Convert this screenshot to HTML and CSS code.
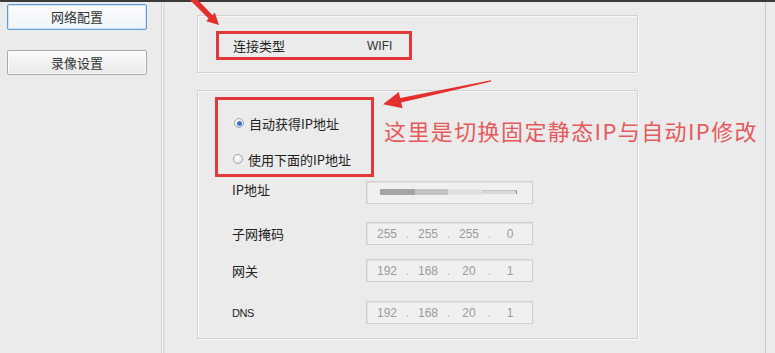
FILE: index.html
```html
<!DOCTYPE html>
<html lang="zh-CN">
<head>
<meta charset="utf-8">
<title>网络配置</title>
<link rel="stylesheet" href="styles.css">
</head>
<body>
<div class="topbar"></div>
<div class="app">
  <aside class="sidebar">
    <button class="nav-btn active">网络配置</button>
    <button class="nav-btn second">录像设置</button>
  </aside>
  <main class="content">
    <section class="group group-conn">
      <div class="mark mark-conn">
        <span class="conn-label">连接类型</span>
        <span class="conn-value">WIFI</span>
      </div>
    </section>
    <section class="group group-ip">
      <div class="mark mark-radio">
        <div class="radio-row"><span class="radio checked"></span><span>自动获得IP地址</span></div>
        <div class="radio-row second"><span class="radio"></span><span>使用下面的IP地址</span></div>
      </div>
      <div class="field field-ip">
        <span class="field-label">IP地址</span>
        <div class="ipbox blurred">
          <span class="bar bar-dark"></span><span class="bar bar-mid"></span><span class="bar bar-light"></span><span class="bar bar-line"></span>
        </div>
      </div>
      <div class="field field-mask">
        <span class="field-label">子网掩码</span>
        <div class="ipbox"><span class="seg">255</span><span class="dot">.</span><span class="seg">255</span><span class="dot">.</span><span class="seg">255</span><span class="dot">.</span><span class="seg">0</span></div>
      </div>
      <div class="field field-gw">
        <span class="field-label">网关</span>
        <div class="ipbox"><span class="seg">192</span><span class="dot">.</span><span class="seg">168</span><span class="dot">.</span><span class="seg">20</span><span class="dot">.</span><span class="seg">1</span></div>
      </div>
      <div class="field field-dns">
        <span class="field-label latin">DNS</span>
        <div class="ipbox"><span class="seg">192</span><span class="dot">.</span><span class="seg">168</span><span class="dot">.</span><span class="seg">20</span><span class="dot">.</span><span class="seg">1</span></div>
      </div>
    </section>
  </main>
  <div class="edge"></div>
</div>
<svg class="arrows" width="775" height="353" viewBox="0 0 775 353">
  <polygon fill="#e3302c" points="190,0 198,0 212.5,15.2 214.8,12.4 219,25 206.2,21.2 208.5,18.6"/>
  <polygon fill="#e3302c" points="491,80.2 491.3,81.4 401.2,102.4 402.6,108.2 383,104.2 398.8,92.1 400.2,97.9"/>
</svg>
<p class="note">这里是切换固定静态IP与自动IP修改</p>
</body>
</html>
```
FILE: styles.css
```css
* { box-sizing: border-box; }

html, body {
  margin: 0;
  padding: 0;
}

body {
  width: 775px;
  height: 353px;
  overflow: hidden;
  position: relative;
  background: #ebebeb;
  font-family: "Noto Sans CJK SC", "Liberation Sans", sans-serif;
  font-size: 13px;
  color: #222;
}

.topbar {
  height: 2px;
  background: #3b3b37;
}

.app {
  display: flex;
  height: 351px;
}

.sidebar {
  width: 162px;
  flex: none;
  border-right: 1px solid #d2d2d2;
  box-shadow: 1px 0 0 #f7f7f7, 3px 0 0 #dedede;
  padding: 2px 0 0 7px;
  display: flex;
  flex-direction: column;
  align-items: flex-start;
}

.nav-btn {
  width: 140px;
  height: 26px;
  padding: 0;
  border: 1px solid #a9a9a9;
  border-radius: 2px;
  background: linear-gradient(#fbfbfb, #e9e9e9);
  box-shadow: inset 0 0 0 1px #fdfdfd;
  font-family: "Noto Sans CJK SC", sans-serif;
  font-size: 13px;
  color: #333;
  line-height: 22px;
}

.nav-btn.active {
  border-color: #5d9ad6;
  box-shadow: inset 0 0 0 1px #cfe4f7;
  background: linear-gradient(#fdfdfd, #eef4f9);
}

.nav-btn.second {
  margin-top: 20px;
  height: 25px;
}

.content {
  flex: 1;
  padding: 13px 0 0 35px;
  display: flex;
  flex-direction: column;
}

.edge {
  width: 10px;
  flex: none;
  border-left: 1px solid #c9c9c9;
}

.group {
  width: 441px;
  border: 1px solid #d3d3d3;
  box-shadow: inset 1px 1px 0 #f8f8f8, 1px 1px 0 #f8f8f8;
  background: #ebebeb;
}

.group-conn {
  height: 58px;
  padding: 15px 0 0 18px;
}

.group-ip {
  margin-top: 17px;
  height: 249px;
  padding: 6px 0 0 17px;
  display: flex;
  flex-direction: column;
}

.mark {
  border: 3px solid #e2383a;
}

.mark-conn {
  width: 196px;
  height: 29px;
  display: flex;
  align-items: center;
  padding-left: 14px;
}

.conn-label {
  width: 134px;
  flex: none;
}

.conn-value {
  font-family: "Liberation Sans", sans-serif;
  font-size: 12px;
  color: #333;
}

.mark-radio {
  width: 159px;
  height: 80px;
  padding: 13px 0 5px 16px;
  display: flex;
  flex-direction: column;
}

.radio-row {
  height: 20px;
  display: flex;
  align-items: center;
  gap: 5px;
  color: #222;
}

.radio-row.second {
  margin-top: 16px;
  margin-left: -1px;
}

.radio {
  width: 10px;
  height: 10px;
  border-radius: 50%;
  border: 1px solid #a8a8a8;
  background: radial-gradient(circle at 40% 35%, #ffffff, #dedede);
  flex: none;
  display: flex;
  align-items: center;
  justify-content: center;
}

.radio.checked::after {
  content: "";
  width: 5px;
  height: 5px;
  border-radius: 50%;
  background: #3a74c9;
}

.field {
  display: flex;
  align-items: center;
  height: 23px;
  margin-left: 17px;
}

.field-ip { margin-top: 4px; }
.field-mask { margin-top: 18px; }
.field-gw { margin-top: 14px; }
.field-dns { margin-top: 19px; }

.field-label {
  width: 134px;
  flex: none;
  color: #222;
}

.field-ip .field-label {
  margin-top: -6px;
}

.field-label.latin {
  font-family: "Liberation Sans", sans-serif;
  font-size: 11px;
  letter-spacing: -0.5px;
}

.ipbox {
  width: 167px;
  height: 23px;
  border: 1px solid #cfcfcf;
  background: #f0f0f0;
  box-shadow: inset 1px 1px 0 #e2e2e2;
  display: flex;
  align-items: center;
  padding-left: 5px;
  font-family: "Liberation Sans", sans-serif;
  font-size: 12px;
  color: #9a9a9a;
}

.seg {
  width: 30px;
  text-align: center;
}

.dot {
  width: 11px;
  text-align: center;
  color: #b5b5b5;
}

.ipbox.blurred {
  padding-left: 13px;
  padding-bottom: 2px;
}

.bar {
  height: 6px;
}

.bar-dark { width: 35px; background: #a3a3a3; }
.bar-mid { width: 33px; background: #c2c2c2; }
.bar-light { width: 34px; background: #e2e2e2; }
.bar-line {
  width: 35px;
  height: 4px;
  background: #d9d9d9;
  border-top: 1px solid #c4c4c4;
  border-right: 1px solid #8c8c8c;
}

.arrows {
  position: absolute;
  left: 0;
  top: 0;
  pointer-events: none;
}

.note {
  position: absolute;
  left: 384px;
  top: 116px;
  margin: 0;
  font-family: "Noto Sans CJK SC", sans-serif;
  font-size: 22px;
  line-height: 28px;
  letter-spacing: 1.4px;
  color: #e45a5c;
  white-space: nowrap;
}
```
